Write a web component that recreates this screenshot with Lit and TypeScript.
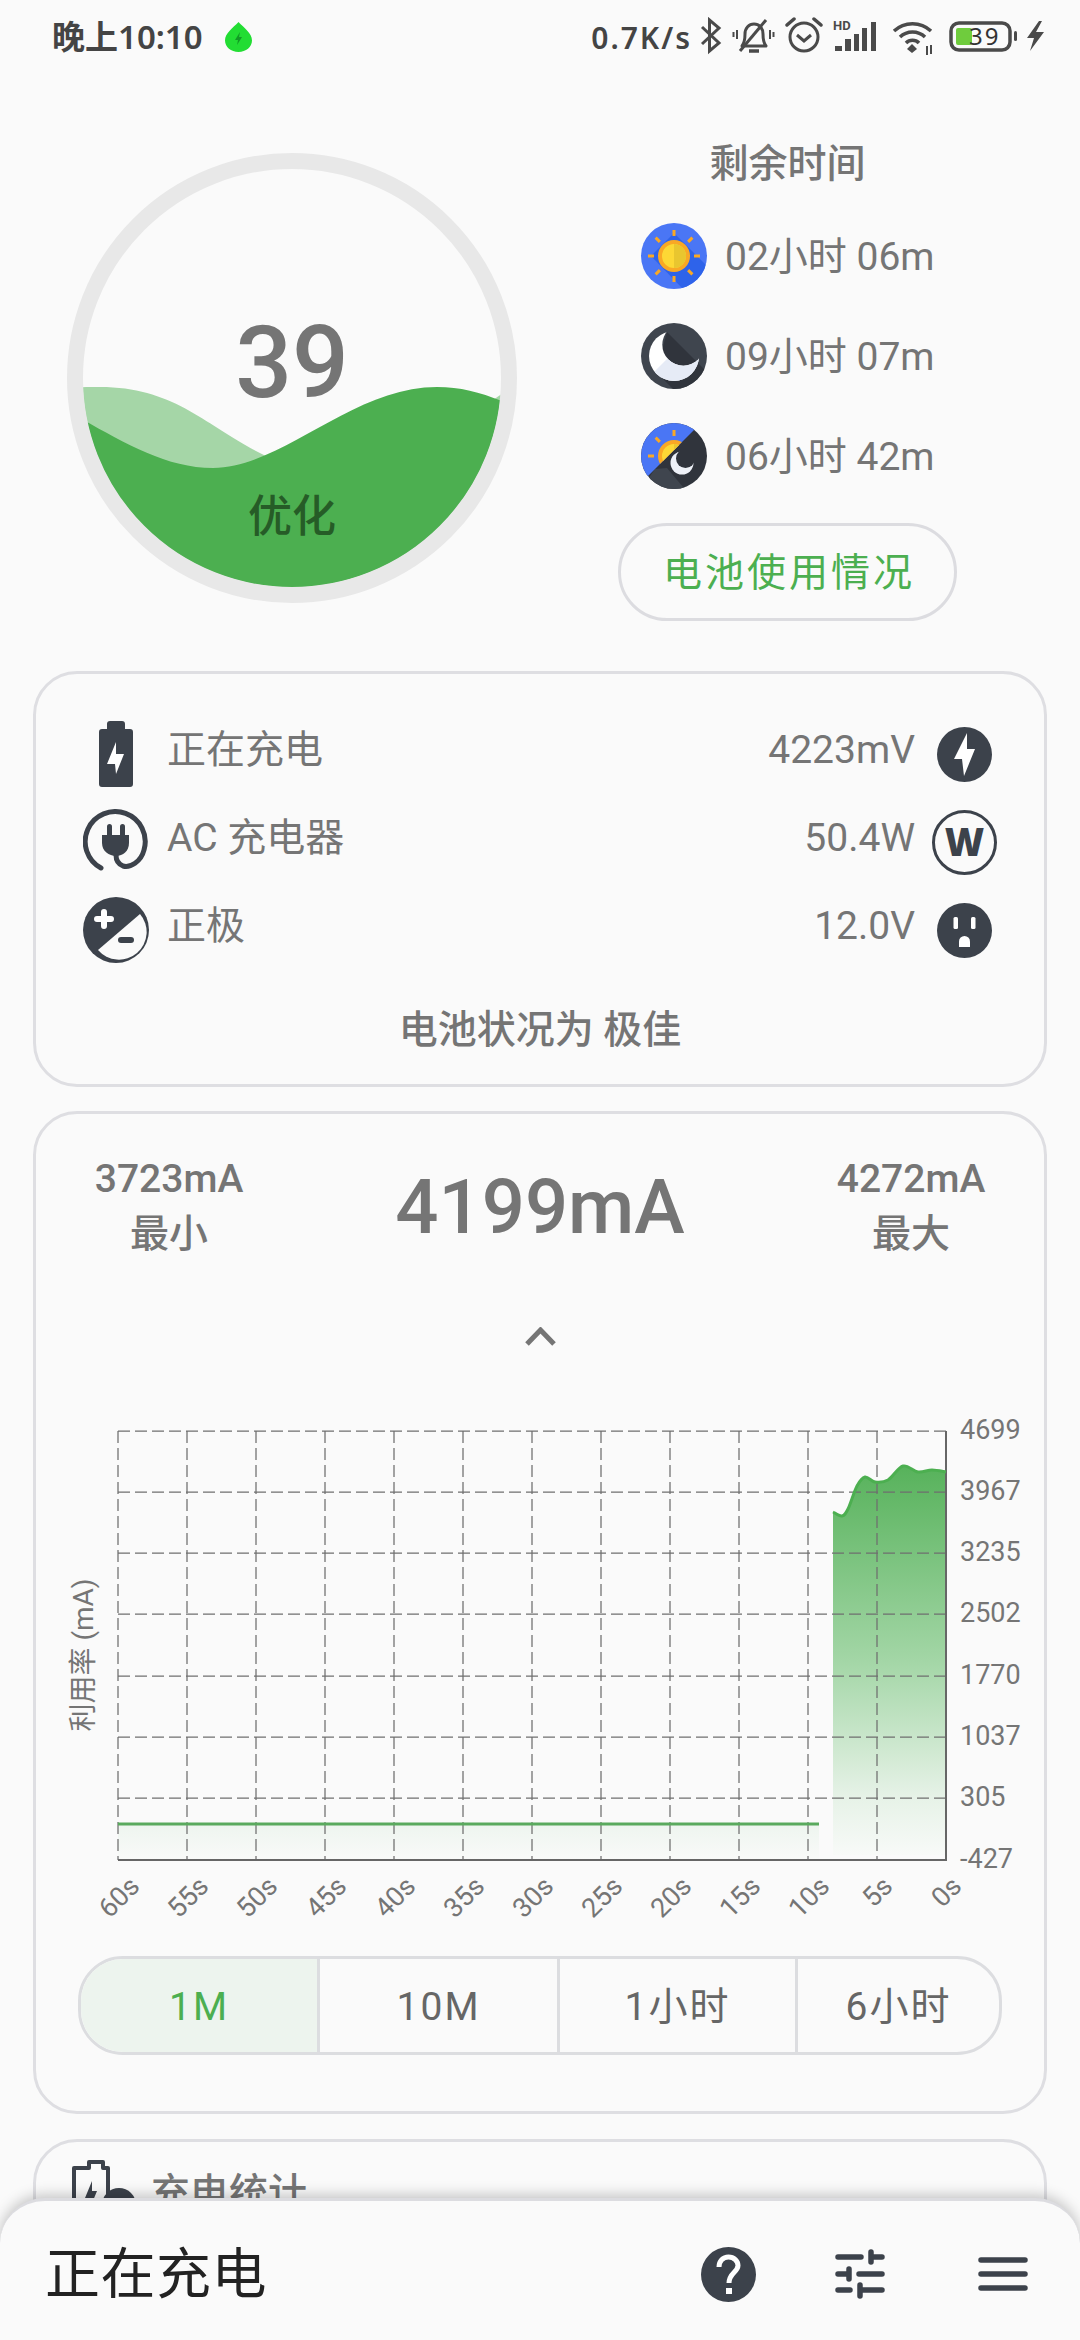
import { LitElement, html, svg, css } from "lit";
import { customElement } from "lit/decorators.js";

const INK = "#3c424b";

const X_LABELS = ["60s", "55s", "50s", "45s", "40s", "35s", "30s", "25s", "20s", "15s", "10s", "5s", "0s"];
const Y_LABELS = ["4699", "3967", "3235", "2502", "1770", "1037", "305", "-427"];
const GRID_Y = [1431, 1492, 1553, 1614, 1676, 1737, 1798, 1860];
const PLOT = { left: 118, right: 946, top: 1431, bottom: 1860, step: 69, base: 1824 };

/** Current trace for the last 10 seconds, in page pixels */
const TRACE: [number, number][] = [
  [833, 1512], [842, 1516], [848, 1509], [857, 1486], [865, 1477], [875, 1482],
  [888, 1480], [903, 1466], [918, 1472], [932, 1470], [946, 1472],
];

/** Catmull-Rom through the points, written as cubic segments */
function smoothPath(pts: [number, number][]): string {
  let d = `M${pts[0][0]} ${pts[0][1]}`;
  for (let i = 0; i < pts.length - 1; i++) {
    const p0 = pts[Math.max(i - 1, 0)];
    const p1 = pts[i];
    const p2 = pts[i + 1];
    const p3 = pts[Math.min(i + 2, pts.length - 1)];
    const c1x = p1[0] + (p2[0] - p0[0]) / 6;
    const c1y = p1[1] + (p2[1] - p0[1]) / 6;
    const c2x = p2[0] - (p3[0] - p1[0]) / 6;
    const c2y = p2[1] - (p3[1] - p1[1]) / 6;
    d += ` C${c1x} ${c1y} ${c2x} ${c2y} ${p2[0]} ${p2[1]}`;
  }
  return d;
}

const sunRays = [0, 45, 90, 135, 180, 225, 270, 315].map(
  (a) => svg`<line x1="33" y1="13" x2="33" y2="7" stroke="#f9a825" stroke-width="3" transform="rotate(${a} 33 33)" />`,
);

const sunBody = svg`
  ${sunRays}
  <circle cx="33" cy="33" r="16" fill="#f9a825" />
  <circle cx="33" cy="33" r="12" fill="#fdd835" />
  <path d="M33 21a12 12 0 0 1 0 24z" fill="#e9c62f" />
`;

const iconSun = html`<svg width="66" height="66" viewBox="0 0 66 66">
  <defs><clipPath id="c1"><circle cx="33" cy="33" r="33" /></clipPath></defs>
  <g clip-path="url(#c1)">
    <rect width="66" height="66" fill="#4a76f5" />
    <path d="M33 10L66 43V66H42L10 33Z" fill="#2e63ea" />
    ${sunBody}
  </g>
</svg>`;

const iconMoon = html`<svg width="66" height="66" viewBox="0 0 66 66">
  <defs>
    <clipPath id="c2"><circle cx="33" cy="33" r="33" /></clipPath>
    <mask id="m2">
      <circle cx="33" cy="33" r="25" fill="#fff" />
      <circle cx="42.3" cy="21.7" r="21" fill="#000" />
    </mask>
    <clipPath id="c2b"><path d="M0 62L62 0L80 80H0Z" /></clipPath>
  </defs>
  <g clip-path="url(#c2)">
    <rect width="66" height="66" fill="#3f454e" />
    <path d="M26 9L66 49V66H32L15 49Z" fill="#30343c" />
    <rect width="66" height="66" fill="#fff" mask="url(#m2)" />
    <g clip-path="url(#c2b)"><rect width="66" height="66" fill="#e6ebf6" mask="url(#m2)" /></g>
  </g>
</svg>`;

const iconSunMoon = html`<svg width="66" height="66" viewBox="0 0 66 66">
  <defs>
    <clipPath id="c3"><circle cx="33" cy="33" r="33" /></clipPath>
    <clipPath id="c3a"><path d="M0 0H60L6 54L0 60Z" /></clipPath>
    <mask id="m3">
      <circle cx="41" cy="40" r="11.5" fill="#fff" />
      <circle cx="44.5" cy="35.5" r="9.5" fill="#000" />
    </mask>
  </defs>
  <g clip-path="url(#c3)">
    <rect width="66" height="66" fill="#30343c" />
    <path d="M66 66H0L14 46L26 45L42 64Z" fill="#3f454e" />
    <g clip-path="url(#c3a)">
      <rect width="66" height="66" fill="#4a76f5" />
      ${sunBody}
    </g>
    <rect width="66" height="66" fill="#eef1f8" mask="url(#m3)" />
  </g>
</svg>`;

const iconBattery = html`<svg width="34" height="66" viewBox="0 0 34 66">
  <path
    d="M8 3a3 3 0 0 1 3-3h12a3 3 0 0 1 3 3v5h5a3 3 0 0 1 3 3v52a3 3 0 0 1-3 3H3a3 3 0 0 1-3-3V11a3 3 0 0 1 3-3h5z"
    fill=${INK}
  />
  <path d="M17 21L8 43H16L17 53L25 33H17Z" fill="#fff" />
</svg>`;

const iconPlug = html`<svg width="66" height="66" viewBox="0 0 66 66">
  <path
    d="M18 59A30 30 0 1 1 61 41C58 53 47 59 40 57C35 55 33 51 33 46"
    fill="none"
    stroke=${INK}
    stroke-width="5"
    stroke-linecap="round"
  />
  <path d="M19 26H46V34C46 42 40 47 33 47C26 47 19 42 19 34Z" fill=${INK} />
  <rect x="24" y="15" width="5" height="13" rx="2.5" fill=${INK} />
  <rect x="37" y="15" width="5" height="13" rx="2.5" fill=${INK} />
</svg>`;

const iconPolarity = html`<svg width="66" height="66" viewBox="0 0 66 66">
  <circle cx="33" cy="33" r="33" fill=${INK} />
  <path d="M15 53L57 17A27 27 0 0 1 15 53Z" fill="#fafafa" />
  <path d="M21 15V29M14 22H28" stroke="#fff" stroke-width="6" stroke-linecap="round" />
  <path d="M38 43H48" stroke=${INK} stroke-width="6" stroke-linecap="round" />
</svg>`;

const iconBolt = html`<svg width="55" height="55" viewBox="0 0 55 55">
  <circle cx="27.5" cy="27.5" r="27.5" fill=${INK} />
  <path d="M30 6L17 32H25L27 49L38 22H30Z" fill="#fff" />
</svg>`;

const iconWatt = html`<svg width="65" height="65" viewBox="0 0 65 65">
  <circle cx="32.5" cy="32.5" r="31" fill="none" stroke=${INK} stroke-width="3" />
  <text x="32.5" y="46" text-anchor="middle" class="watt" fill=${INK}>W</text>
</svg>`;

const iconOutlet = html`<svg width="55" height="55" viewBox="0 0 55 55">
  <circle cx="27.5" cy="27.5" r="27.5" fill=${INK} />
  <rect x="16.5" y="14" width="4.5" height="12" rx="1.5" fill="#fff" />
  <rect x="34" y="14" width="4.5" height="12" rx="1.5" fill="#fff" />
  <path d="M22 44V38.5A5.5 5.5 0 0 1 33 38.5V44Z" fill="#fff" />
</svg>`;

const iconHelp = html`<svg width="55" height="55" viewBox="0 0 55 55">
  <circle cx="27.5" cy="27.5" r="27.5" fill=${INK} />
  <path
    d="M18 20C18 14 22 10 27.5 10C33 10 37 14 37 18.500C37 25 28 26 28 36"
    fill="none"
    stroke="#fff"
    stroke-width="5"
  />
  <rect x="25" y="41" width="6" height="6" fill="#fff" />
</svg>`;

const iconSliders = html`<svg width="50" height="50" viewBox="0 0 50 50">
  <path
    d="M3 8H26M36 8H47M36 3V13M3 25H13M14 20V30M24 25H47M3 41H15M25 41H47M25 36V47"
    fill="none"
    stroke=${INK}
    stroke-width="5.500"
    stroke-linecap="round"
  />
</svg>`;

const iconMenu = html`<svg width="50" height="50" viewBox="0 0 50 50">
  <path d="M3 11H47M3 25H47M3 39H47" fill="none" stroke=${INK} stroke-width="5.500" stroke-linecap="round" />
</svg>`;

const iconStats = html`<svg width="66" height="66" viewBox="0 0 66 66">
  <path d="M10 8H17V2H31V8H36V50H2V8Z" fill="none" stroke=${INK} stroke-width="4" stroke-linejoin="round" />
  <path d="M20 21L13 38H18L18 48L25 31H20Z" fill=${INK} />
  <circle cx="47" cy="45" r="17" fill=${INK} />
</svg>`;

/** Status bar glyphs, drawn in page pixels offset by (700, 18) */
const statusIcons = html`<svg class="status-icons" width="346" height="40" viewBox="700 18 346 40">
  <g fill="none" stroke="#4a4a4a" stroke-width="3">
    <path d="M702 28L719 44L709.500 52V21L719 29L702 45" />
    <path
      d="M742 47C745 43 745 39 745 35C745 29 749 25 754 25C759 25 763 29 763 35C763 39 763 43 766 47Z"
      stroke-linejoin="round"
    />
    <path d="M740 52L766 21" />
    <path d="M749 52H759" stroke-width="3.500" />
    <path d="M737 31V40M770 31V40M733.500 33V38M773.500 33V38" stroke-width="2" />
    <circle cx="804" cy="38" r="14" />
    <path d="M787 26L794 20M821 26L814 20" stroke-width="3.500" stroke-linecap="round" />
    <path d="M797 36L804 42L811 36" />
    <path d="M894 32A27 27 0 0 1 931 32" stroke-width="3.500" />
    <path d="M900 38A18 18 0 0 1 925 38" stroke-width="3.500" />
    <path d="M906 44A9 9 0 0 1 919 44" stroke-width="3.500" />
    <rect x="951" y="24" width="59" height="27" rx="8" stroke-width="3.500" />
  </g>
  <g fill="#4a4a4a">
    <text x="833" y="31" class="hd">HD</text>
    <rect x="835" y="47" width="7" height="5" />
    <rect x="845" y="40" width="6" height="12" />
    <rect x="854" y="35" width="5" height="17" />
    <rect x="862" y="29" width="5" height="23" />
    <rect x="871" y="23" width="5" height="29" />
    <path d="M912 45L917 50L912 54L907 50Z" />
    <path d="M926 47V56H928V47ZM930 46V55H932V46Z" />
    <rect x="1014" y="32" width="3" height="10" rx="1.500" />
    <path d="M1039 22L1027 39H1034L1030 52L1044 33H1036L1042 22Z" />
  </g>
  <rect x="956" y="29" width="16" height="17" rx="2" fill="#6fcc3d" />
  <text x="969" y="46" class="level">39</text>
</svg>`;

const iconLeaf = html`<svg class="leaf" width="27" height="30" viewBox="0 0 27 30">
  <path d="M13.500 0C19 6 27 11 27 18.500C27 25 21 30 13.500 30C6 30 0 25 0 18.500C0 11 8 6 13.500 0Z" fill="#22dd33" />
  <path d="M15 10L10 18H13L12 23L17 15H14Z" fill="#129a25" />
</svg>`;

@customElement("app-root")
export class AppRoot extends LitElement {
  static override styles = css`
    :host {
      display: block;
      position: relative;
      width: 1080px;
      height: 2340px;
      overflow: hidden;
      background: #fafafa;
      color: #757575;
      font-family: Roboto, "Noto Sans CJK SC", sans-serif;
      font-size: 39px;
    }

    svg {
      display: block;
      flex-shrink: 0;
    }

    .status {
      display: flex;
      align-items: center;
      height: 74px;
      padding: 0 34px 0 52px;
      box-sizing: border-box;
      color: #444;
      font-family: "Noto Sans", "Noto Sans CJK SC", sans-serif;
      font-weight: 600;
    }

    .status .time {
      font-size: 33px;
      line-height: 40px;
    }

    .status .leaf {
      margin-left: 22px;
    }

    .status .net {
      margin-left: auto;
      font-size: 30px;
      letter-spacing: 2px;
    }

    .status .status-icons {
      margin-left: 8px;
    }

    .hd {
      font: 700 13px Roboto, sans-serif;
    }

    .level {
      font: 400 24px "Noto Sans", sans-serif;
      letter-spacing: 2px;
      fill: #333;
    }

    .watt {
      font: 800 38px "Open Sans", sans-serif;
    }

    .top {
      display: flex;
      align-items: flex-start;
      height: 597px;
      padding-left: 67px;
    }

    .gauge {
      margin-top: 79px;
    }

    .gauge .pct {
      font: 500 100px Roboto, sans-serif;
      fill: #757575;
    }

    .gauge .state {
      font: 500 44px Roboto, "Noto Sans CJK SC", sans-serif;
      fill: #265c27;
    }

    .remain {
      display: flex;
      flex-direction: column;
      align-items: center;
      gap: 34px;
      width: 339px;
      margin: 62px 0 0 101px;
    }

    .remain h2 {
      margin: 0;
      font-size: 39px;
      font-weight: 500;
      line-height: 53px;
      padding-top: 2px;
      height: 51px;
    }

    .remain-row {
      display: flex;
      align-items: center;
      gap: 18px;
      align-self: flex-start;
      height: 66px;
      padding-left: 23px;
      line-height: 54px;
    }

    .remain-row span {
      margin-top: 2px;
    }

    .usage {
      display: flex;
      align-items: center;
      justify-content: center;
      width: 339px;
      height: 98px;
      padding: 2px 0 0 3px;
      box-sizing: border-box;
      border: 3px solid #dcdce0;
      border-radius: 49px;
      background: #fafafa;
      color: #4caf50;
      letter-spacing: 3px;
      line-height: 54px;
    }

    .card {
      margin: 0 33px;
      border: 3px solid #dedee2;
      border-radius: 44px;
    }

    .power {
      padding: 47px 47px 27px;
    }

    .power-row {
      display: flex;
      align-items: center;
      height: 66px;
      margin-bottom: 22px;
    }

    .power-row .slot {
      display: flex;
      justify-content: center;
      width: 66px;
    }

    .power-row span {
      margin: 0 0 8px 18px;
      line-height: 54px;
    }

    .power-row .value {
      margin: 0 16px 8px auto;
    }

    .power-foot {
      margin-top: 40px;
      font-weight: 500;
      line-height: 54px;
      text-align: center;
    }

    .current {
      margin-top: 24px;
      padding: 38px 0 56px;
    }

    .stats {
      display: grid;
      grid-template-columns: 266px 1fr 266px;
      align-items: center;
      text-align: center;
      font-weight: 500;
      line-height: 55px;
    }

    .stats .now {
      font-size: 76px;
    }

    .chevron {
      margin: 65px auto 54px;
    }

    .axis {
      font-size: 27px;
      fill: #757575;
    }

    .axis-title {
      font-size: 28px;
      fill: #757575;
    }

    .range {
      display: grid;
      grid-template-columns: 236px 240px 238px 1fr;
      height: 99px;
      margin: 16px 42px 0;
      padding-top: 0;
      box-sizing: border-box;
      border: 3px solid #dcdde0;
      border-radius: 45px;
      overflow: hidden;
      color: #666;
      letter-spacing: 2px;
      line-height: 54px;
    }

    .range div {
      display: flex;
      align-items: center;
      justify-content: center;
      padding-top: 3px;
      border-left: 3px solid #dcdde0;
    }

    .range div:first-child {
      border-left: 0;
    }

    .range .on {
      background: #edf4ee;
      color: #4caf50;
    }

    .charge-stats {
      display: flex;
      align-items: flex-start;
      gap: 13px;
      height: 300px;
      margin-top: 25px;
      padding: 18px 0 0 36px;
      box-sizing: border-box;
      font-weight: 500;
    }

    .charge-stats span {
      line-height: 66px;
    }

    .sheet {
      position: absolute;
      left: 0;
      right: 0;
      bottom: 0;
      display: flex;
      align-items: center;
      height: 142px;
      padding: 45px 52px 38px 45px;
      box-sizing: border-box;
      border-top: 3px solid #dcdce0;
      border-radius: 45px 45px 0 0;
      background: #fafafa;
      box-shadow: 0 -3px 14px rgba(0, 0, 0, 0.22);
      color: #222;
    }

    .sheet .title {
      margin-right: auto;
      font-size: 55px;
      line-height: 60px;
      letter-spacing: 0.5px;
    }

    .sheet .sliders {
      margin: 0 93px 0 79px;
    }
  `;

  private renderGauge() {
    return html`<svg class="gauge" width="450" height="450" viewBox="0 0 450 450">
      <defs><clipPath id="tank"><circle cx="225" cy="225" r="209.500" /></clipPath></defs>
      <g clip-path="url(#tank)">
        <path d="M0 236C10 234 20 234 33 234C110 234 140 275 201 304V450H0Z" fill="#a5d6a7" />
        <path d="M426 247L445 234V262Z" fill="#a5d6a7" />
        <path
          d="M0 258C50 285 95 315 146 315C215 315 285 234 370 234C395 234 415 240 440 250V450H0Z"
          fill="#4caf50"
        />
      </g>
      <circle cx="225" cy="225" r="217" fill="none" stroke="#e8e8e8" stroke-width="16" />
      <text x="225" y="244" text-anchor="middle" class="pct">39</text>
      <text x="225" y="379" text-anchor="middle" class="state">优化</text>
    </svg>`;
  }

  private renderChart() {
    const { left, right, top, bottom, step, base } = PLOT;
    const trace = smoothPath(TRACE);
    return html`<svg width="1008" height="540" viewBox="36 1400 1008 540">
      <defs>
        <linearGradient id="fillMain" x1="0" y1="0" x2="0" y2="1">
          <stop offset="0" stop-color="#57b25b" />
          <stop offset="0.5" stop-color="#a3d6a6" />
          <stop offset="0.85" stop-color="#e6f2e7" />
          <stop offset="1" stop-color="#f8faf8" />
        </linearGradient>
        <linearGradient id="fillBase" x1="0" y1="0" x2="0" y2="1">
          <stop offset="0" stop-color="#eef5ef" />
          <stop offset="1" stop-color="#f9faf9" />
        </linearGradient>
      </defs>
      <rect x=${left} y=${base} width="701" height=${bottom - base} fill="url(#fillBase)" />
      <path d="${trace} V${bottom - 5} H833 Z" fill="url(#fillMain)" />
      <g stroke="#6f6f6f" stroke-width="1.250" stroke-dasharray="12 5" fill="none">
        ${GRID_Y.map((y) => svg`<line x1=${left} y1=${y} x2=${right} y2=${y} />`)}
        ${X_LABELS.map((_, i) => svg`<line x1=${left + i * step} y1=${top} x2=${left + i * step} y2=${bottom} />`)}
      </g>
      <path d="M${right} ${top}V${bottom}H${left}" fill="none" stroke="#666" stroke-width="2" />
      <line x1=${left} y1=${base} x2="819" y2=${base} stroke="#5aaa5e" stroke-width="3" />
      <path d=${trace} fill="none" stroke="#4caf50" stroke-width="3" />
      ${Y_LABELS.map((t, i) => svg`<text x="960" y=${GRID_Y[i] + 8} class="axis">${t}</text>`)}
      ${X_LABELS.map((t, i) => {
        const x = left + i * step + (t.length === 2 ? 17 : 23);
        return svg`<text class="axis" text-anchor="end" transform="translate(${x} 1888) rotate(-45)">${t}</text>`;
      })}
      <text class="axis-title" text-anchor="middle" transform="translate(93 1655) rotate(-90)">利用率 (mA)</text>
    </svg>`;
  }

  override render() {
    return html`
      <div class="status">
        <span class="time">晚上10:10</span>
        ${iconLeaf}
        <span class="net">0.7K/s</span>
        ${statusIcons}
      </div>

      <div class="top">
        ${this.renderGauge()}
        <div class="remain">
          <h2>剩余时间</h2>
          <div class="remain-row">${iconSun}<span>02小时 06m</span></div>
          <div class="remain-row">${iconMoon}<span>09小时 07m</span></div>
          <div class="remain-row">${iconSunMoon}<span>06小时 42m</span></div>
          <div class="usage">电池使用情况</div>
        </div>
      </div>

      <div class="card power">
        <div class="power-row">
          <div class="slot">${iconBattery}</div>
          <span>正在充电</span>
          <span class="value">4223mV</span>
          <div class="slot">${iconBolt}</div>
        </div>
        <div class="power-row">
          <div class="slot">${iconPlug}</div>
          <span>AC 充电器</span>
          <span class="value">50.4W</span>
          <div class="slot">${iconWatt}</div>
        </div>
        <div class="power-row">
          <div class="slot">${iconPolarity}</div>
          <span>正极</span>
          <span class="value">12.0V</span>
          <div class="slot">${iconOutlet}</div>
        </div>
        <div class="power-foot">电池状况为 极佳</div>
      </div>

      <div class="card current">
        <div class="stats">
          <div>3723mA<br />最小</div>
          <div class="now">4199mA</div>
          <div>4272mA<br />最大</div>
        </div>
        <svg class="chevron" width="33" height="19" viewBox="0 0 33 19">
          <path d="M3 17L16.500 3L30 17" fill="none" stroke="#757575" stroke-width="5" />
        </svg>
        ${this.renderChart()}
        <div class="range">
          <div class="on">1M</div>
          <div>10M</div>
          <div>1小时</div>
          <div>6小时</div>
        </div>
      </div>

      <div class="card charge-stats">${iconStats}<span>充电统计</span></div>

      <div class="sheet">
        <span class="title">正在充电</span>
        ${iconHelp}
        <div class="sliders">${iconSliders}</div>
        ${iconMenu}
      </div>
    `;
  }
}
